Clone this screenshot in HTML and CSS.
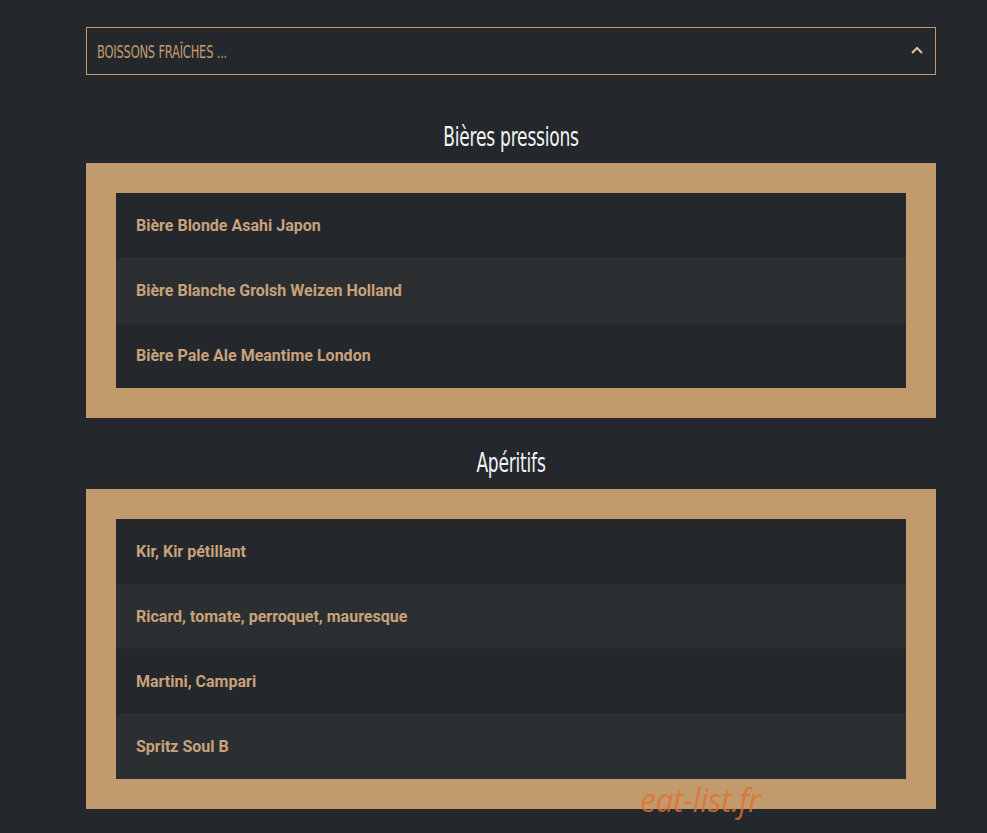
FILE: index.html
```html
<!DOCTYPE html>
<html>
<head>
    <title>Boissons fraîches</title>
    <link rel="stylesheet" href="styles.css">
</head>
<body>
    <div class="container">
        <div class="dropdown">
            <span class="dropdown-label">BOISSONS FRAÎCHES ...</span>
            <svg class="chevron" width="12" height="8" viewBox="0 0 12 8">
                <path d="M1 7 L6 2 L11 7" fill="none" stroke="#e0c3a0" stroke-width="2"/>
            </svg>
        </div>

        <div class="section">
            <h2 class="section-title">Bières pressions</h2>
            <div class="menu-box">
                <ul class="menu-list">
                    <li>Bière Blonde Asahi Japon</li>
                    <li>Bière Blanche Grolsh Weizen Holland</li>
                    <li>Bière Pale Ale Meantime London</li>
                </ul>
            </div>
        </div>

        <div class="section">
            <h2 class="section-title">Apéritifs</h2>
            <div class="menu-box">
                <ul class="menu-list">
                    <li>Kir, Kir pétillant</li>
                    <li>Ricard, tomate, perroquet, mauresque</li>
                    <li>Martini, Campari</li>
                    <li>Spritz Soul B</li>
                </ul>
            </div>
        </div>
    </div>

    <div class="watermark">eat-list.fr</div>
</body>
</html>
```

FILE: styles.css
```css
body {
    margin: 0;
    background-color: #24282c;
    font-family: Roboto, "Liberation Sans", sans-serif;
    overflow: hidden;
}

.container {
    width: 850px;
    margin-left: 86px;
    padding-top: 27px;
}

.dropdown {
    height: 48px;
    box-sizing: border-box;
    border: 1px solid #c29c6f;
    display: flex;
    align-items: center;
    justify-content: space-between;
    padding: 0 12px 0 10px;
}

/* narrow caps label */
.dropdown-label {
    display: inline-block;
    color: #c29c6f;
    font-family: "DejaVu Sans Condensed", "DejaVu Sans", sans-serif;
    font-size: 18px;
    letter-spacing: -0.3px;
    transform: scaleX(0.71);
    transform-origin: left center;
    margin-top: 1px;
}

.chevron {
    margin-top: -2px;
}

.section {
    padding-top: 47px;
}

.section-title {
    margin: 0 0 11px;
    text-align: center;
    color: #f4f4f4;
    font-family: "DejaVu Sans Condensed", "DejaVu Sans", sans-serif;
    font-weight: normal;
    font-size: 26px;
    line-height: 30px;
    letter-spacing: -0.3px;
    transform: scaleX(0.73);
}

.section + .section {
    padding-top: 30px;
}

.menu-box {
    background-color: #c19b6c;
    padding: 30px;
}

.menu-list {
    list-style: none;
    margin: 0;
    padding: 0;
}

.menu-list li {
    height: 65px;
    display: flex;
    align-items: center;
    padding-left: 20px;
    background-color: #24272b;
    color: #c8a27a;
    font-weight: bold;
    font-size: 16px;
}

.menu-list li:nth-child(even) {
    background-color: #2c2f32;
}

.watermark {
    position: absolute;
    left: 640px;
    top: 778px;
    color: rgba(226, 112, 50, 0.8);
    font-family: "Open Sans", sans-serif;
    font-style: italic;
    font-size: 32px;
    letter-spacing: -0.5px;
}
```
